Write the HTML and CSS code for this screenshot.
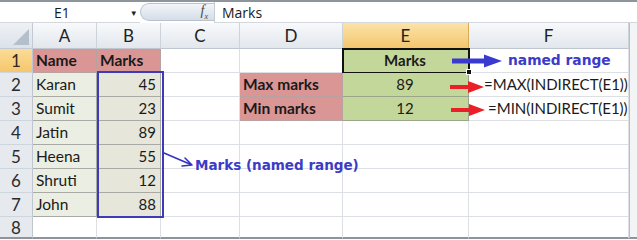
FILE: index.html
```html
<!DOCTYPE html>
<html>
<head>
    <title>INDIRECT named range</title>
    <link rel="stylesheet" href="styles.css">
</head>
<body>
    <div class="screen">
        <div class="formula-bar">
            <div class="name-box">
                <span class="cell-ref">E1</span>
                <span class="drop">&#9660;</span>
            </div>
            <div class="fx-pill"><span class="fx">f<sub>x</sub></span></div>
            <div class="formula-input">Marks</div>
        </div>

        <div class="sheet">
            <div class="corner"></div>
            <div class="ch">A</div>
            <div class="ch">B</div>
            <div class="ch">C</div>
            <div class="ch">D</div>
            <div class="ch sel">E</div>
            <div class="ch">F</div>
            <div class="edge"></div>

            <div class="rh sel">1</div>
            <div class="cell pink bold">Name</div>
            <div class="cell pink bold">Marks</div>
            <div class="cell"></div>
            <div class="cell"></div>
            <div class="cell green bold center active">Marks</div>
            <div class="cell note">named range</div>
            <div class="edge"></div>

            <div class="rh">2</div>
            <div class="cell name">Karan</div>
            <div class="cell mark num">45</div>
            <div class="cell"></div>
            <div class="cell pink bold">Max marks</div>
            <div class="cell green center">89</div>
            <div class="cell formula">=MAX(INDIRECT(E1))</div>
            <div class="edge"></div>

            <div class="rh">3</div>
            <div class="cell name">Sumit</div>
            <div class="cell mark num">23</div>
            <div class="cell"></div>
            <div class="cell pink bold">Min marks</div>
            <div class="cell green center">12</div>
            <div class="cell formula min">=MIN(INDIRECT(E1))</div>
            <div class="edge"></div>

            <div class="rh">4</div>
            <div class="cell name">Jatin</div>
            <div class="cell mark num">89</div>
            <div class="cell"></div>
            <div class="cell"></div>
            <div class="cell"></div>
            <div class="cell"></div>
            <div class="edge"></div>

            <div class="rh">5</div>
            <div class="cell name">Heena</div>
            <div class="cell mark num">55</div>
            <div class="cell"></div>
            <div class="cell"></div>
            <div class="cell"></div>
            <div class="cell"></div>
            <div class="edge"></div>

            <div class="rh">6</div>
            <div class="cell name">Shruti</div>
            <div class="cell mark num">12</div>
            <div class="cell"></div>
            <div class="cell"></div>
            <div class="cell"></div>
            <div class="cell"></div>
            <div class="edge"></div>

            <div class="rh">7</div>
            <div class="cell name">John</div>
            <div class="cell mark num">88</div>
            <div class="cell"></div>
            <div class="cell"></div>
            <div class="cell"></div>
            <div class="cell"></div>
            <div class="edge"></div>

            <div class="rh last">8</div>
            <div class="cell last"></div>
            <div class="cell last"></div>
            <div class="cell last"></div>
            <div class="cell last"></div>
            <div class="cell last"></div>
            <div class="cell last"></div>
            <div class="edge last"></div>
        </div>

        <!-- annotations drawn over the sheet -->
        <div class="range-box"></div>
        <div class="fill-handle"></div>

        <svg class="hand-arrow" width="40" height="24" viewBox="0 0 40 24">
            <path d="M2 3 L30 15 M23 8 L30 15 L20 16" fill="none" stroke="#3434c4" stroke-width="1.6" stroke-linecap="round" stroke-linejoin="round"/>
        </svg>
        <div class="range-label">Marks (named range)</div>

        <svg class="arrow blue" width="52" height="16" viewBox="0 0 52 16">
            <path d="M0 5.5 H32 V1.5 L50 8 L32 14.5 V10.5 H0 Z" fill="#3a3ad0"/>
        </svg>
        <svg class="arrow red r1" width="36" height="14" viewBox="0 0 36 14">
            <path d="M0 5 H18 V1 L34 7 L18 13 V9 H0 Z" fill="#ea1f27"/>
        </svg>
        <svg class="arrow red r2" width="36" height="14" viewBox="0 0 36 14">
            <path d="M0 5 H18 V1 L34 7 L18 13 V9 H0 Z" fill="#ea1f27"/>
        </svg>
    </div>
</body>
</html>
```

FILE: styles.css
```css
body {
    margin: 0;
    background: #ffffff;
    font-family: 'Lato', 'Liberation Sans', sans-serif;
    color: #1a1a1a;
    overflow: hidden;
}

.screen {
    position: relative;
    width: 637px;
    height: 240px;
    overflow: hidden;
}

/* formula bar */

.formula-bar {
    display: flex;
    height: 21px;
    border-top: 2px solid #8e949c;
    background: #ffffff;
    font-family: 'Open Sans', 'Liberation Sans', sans-serif;
    font-size: 14px;
}

.name-box {
    width: 140px;
    display: flex;
    align-items: center;
    border-bottom: 1px solid #d4d8dd;
}

.cell-ref {
    margin-left: 54px;
}

.drop {
    font-size: 8px;
    margin-left: 60px;
    color: #222;
}

.fx-pill {
    width: 74px;
    margin: 1px 0 2px;
    border-radius: 10px 0 0 10px;
    background: linear-gradient(#f2f5f9, #d5dde7);
    border: 1px solid #b9c3cf;
    border-right: none;
    display: flex;
    align-items: center;
    justify-content: flex-end;
    padding-right: 6px;
    box-sizing: border-box;
}

.fx {
    font-family: 'Liberation Serif', serif;
    font-style: italic;
    font-size: 14px;
    color: #4a4a4a;
}

.fx sub {
    font-size: 8px;
}

.formula-input {
    flex: 1;
    border-left: 1px solid #c6ccd4;
    border-bottom: 1px solid #d4d8dd;
    padding-left: 7px;
    display: flex;
    align-items: center;
}

/* grid */

.sheet {
    display: grid;
    grid-template-columns: 33px 64px 64px 79px 103px 126px 160px 8px;
    grid-template-rows: 26px repeat(7, 24px) 22px;
    font-size: 15px;
}

.corner,
.ch,
.rh,
.cell,
.edge {
    box-sizing: border-box;
}

.corner {
    background: linear-gradient(#eef1f5, #dce2ea);
    border-right: 1px solid #c3cad3;
    border-bottom: 1px solid #c3cad3;
    position: relative;
}

.corner::after {
    content: "";
    position: absolute;
    right: 3px;
    bottom: 3px;
    border-left: 16px solid transparent;
    border-bottom: 16px solid #b4bfcc;
}

.ch {
    background: linear-gradient(#f8f9fb, #e2e7ed);
    border-right: 1px solid #cdd3da;
    border-bottom: 1px solid #bfc6cf;
    display: flex;
    align-items: center;
    justify-content: center;
    font-size: 17px;
    color: #222;
}

.ch.sel {
    background: linear-gradient(#fbe3a9, #f4c66e);
    border-right-color: #d9aa55;
}

.rh {
    background: #e6eaef;
    border-right: 1px solid #bfc6cf;
    border-bottom: 1px solid #cfd5dc;
    display: flex;
    align-items: center;
    justify-content: center;
    font-size: 17px;
    color: #2a2a2a;
}

.rh.sel {
    background: linear-gradient(#fbdc97, #f6c66c);
}

.cell {
    border-right: 1px solid #dcdfe3;
    border-bottom: 1px solid #dcdfe3;
    display: flex;
    align-items: flex-end;
    padding: 0 4px 3px 3px;
    white-space: nowrap;
}

.edge {
    background: #f3f4f6;
    border-left: 1px solid #b8bec6;
}

.last {
    border-bottom: 2px solid #8f949a;
}

.bold {
    font-weight: 700;
}

.center {
    justify-content: center;
}

.num {
    justify-content: flex-end;
}

.pink {
    background: #da9694;
    border-color: #b8a2a1;
    font-size: 15.5px;
}

.green {
    background: #c4d79b;
    border-color: #9aa58a;
}

.name {
    background: #ebeee2;
    border-color: #a9aaa5;
    font-size: 15.5px;
}

.mark {
    background: #e6e6da;
    border-color: #a9aaa5;
}

.active {
    outline: 2px solid #111;
    outline-offset: -1px;
}

.note {
    padding-left: 39px;
    padding-bottom: 4px;
    font-family: 'DejaVu Sans', sans-serif;
    font-weight: 700;
    font-size: 13.8px;
    color: #3b3bc8;
}

.formula {
    padding-left: 15px;
    font-size: 15px;
}

.formula.min {
    padding-left: 19px;
}

/* annotation layer */

.range-box {
    position: absolute;
    left: 97px;
    top: 71px;
    width: 67px;
    height: 147px;
    border: 2px solid #3c3cb8;
    box-sizing: border-box;
}

.fill-handle {
    position: absolute;
    left: 466px;
    top: 69px;
    width: 6px;
    height: 6px;
    background: #111;
    border: 1px solid #fff;
    box-sizing: border-box;
}

.hand-arrow {
    position: absolute;
    left: 162px;
    top: 150px;
}

.range-label {
    position: absolute;
    left: 195px;
    top: 157px;
    font-family: 'DejaVu Sans', sans-serif;
    font-weight: 700;
    font-size: 13.5px;
    color: #3b3bc8;
}

.arrow {
    position: absolute;
}

.arrow.blue {
    left: 452px;
    top: 53px;
}

.arrow.r1 {
    left: 450px;
    top: 80px;
}

.arrow.r2 {
    left: 451px;
    top: 103px;
}
```
